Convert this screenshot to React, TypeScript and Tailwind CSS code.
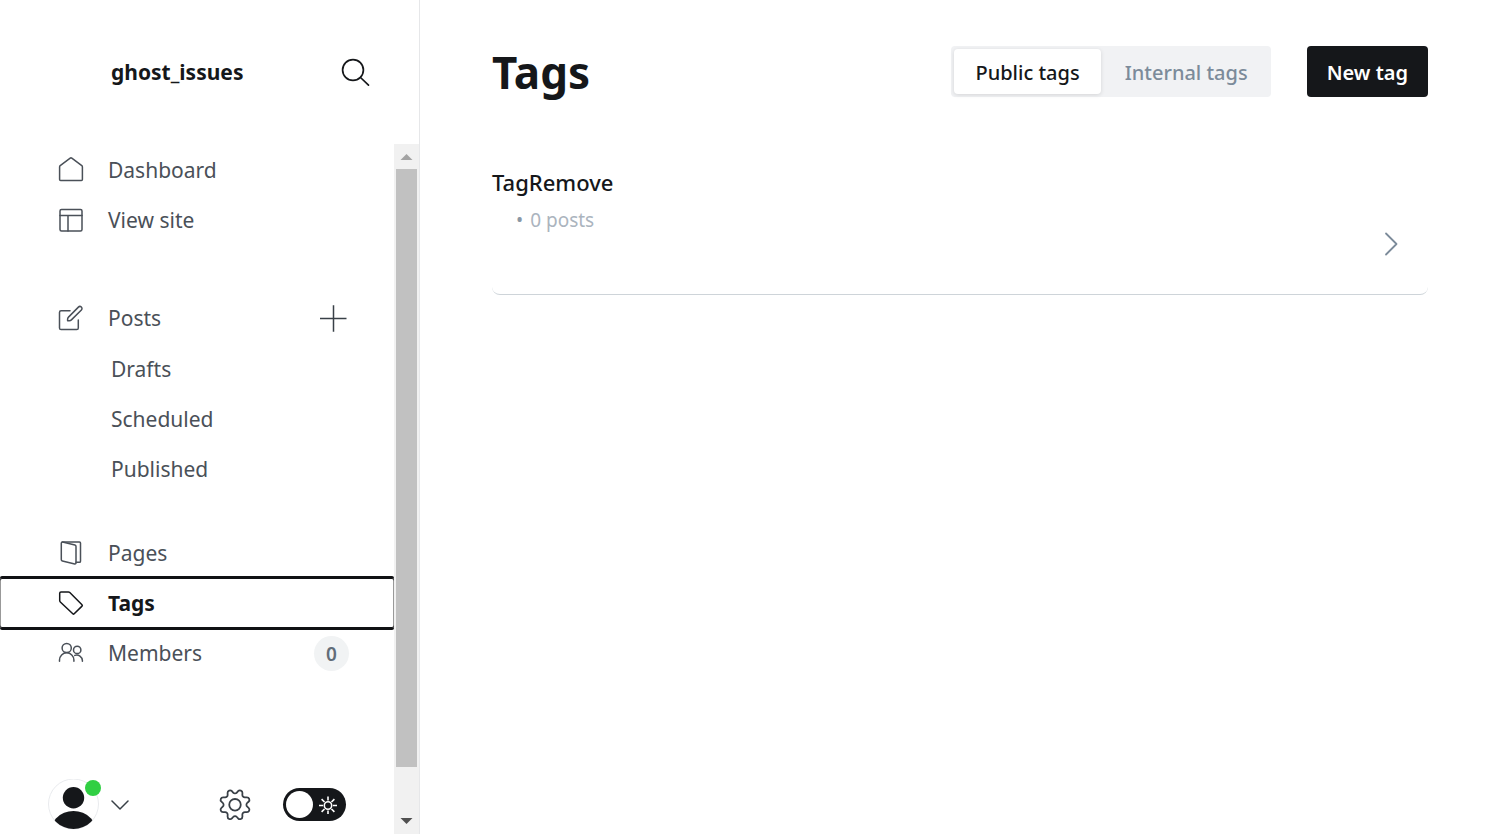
import type { ReactNode } from 'react';

function Icon({ children }: { children: ReactNode }) {
  return (
    <svg
      className="size-[26px] shrink-0"
      viewBox="0 0 26 26"
      fill="none"
      stroke="currentColor"
      strokeWidth="1.5"
      strokeLinecap="round"
      strokeLinejoin="round"
      aria-hidden="true"
    >
      {children}
    </svg>
  );
}

const HomeIcon = () => (
  <Icon>
    <path d="M1.6 9.9a1.5 1.5 0 0 1 .6-1.2L12.2 1.2a1.3 1.3 0 0 1 1.6 0L23.8 8.7a1.5 1.5 0 0 1 .6 1.2V22.5a1 1 0 0 1-1 1H2.6a1 1 0 0 1-1-1Z" />
  </Icon>
);

const LayoutIcon = () => (
  <Icon>
    <rect x="2" y="2.4" width="22" height="21.6" rx="1.5" />
    <path d="M2 8.5H24M10 8.5V24" />
  </Icon>
);

const EditIcon = () => (
  <Icon>
    <path d="M12 5.8H3.1a1.6 1.6 0 0 0-1.6 1.6V22.9a1.6 1.6 0 0 0 1.6 1.6H18.7a1.6 1.6 0 0 0 1.6-1.6V15" />
    <path d="M9.6 15.8V14.2a3 3 0 0 1 .9-2.1L20.4 2.1a2 2 0 0 1 3 2.9L13.4 14.9a3 3 0 0 1-2.1.9Z" />
  </Icon>
);

const PagesIcon = () => (
  <Icon>
    <path d="M4.6 2.1L16.9 5a1.4 1.4 0 0 1 1.1 1.4V23a1 1 0 0 1-1.2 1L4.4 21a1.4 1.4 0 0 1-1.1-1.4V3.1a1 1 0 0 1 1.3-1Z" />
    <path d="M4.3 2H21.4a1.1 1.1 0 0 1 1.1 1.1V21.2a1.1 1.1 0 0 1-1.1 1.1H18" />
  </Icon>
);

const TagIcon = () => (
  <Icon>
    <path d="M3 1.9H10.4a2 2 0 0 1 1.4.6L24 14.7a1 1 0 0 1 0 1.4L16.2 23.8a1 1 0 0 1-1.4 0L2.3 12a2 2 0 0 1-.6-1.4V3.2A1.3 1.3 0 0 1 3 1.9Z" />
  </Icon>
);

const MembersIcon = () => (
  <Icon>
    <circle cx="8.7" cy="8" r="4.6" />
    <path d="M1.5 21.2V20a7.2 7.2 0 0 1 14.4 0v1.2" />
    <circle cx="19.2" cy="9.9" r="3.7" />
    <path d="M16.8 15.4A5.6 5.6 0 0 1 24.4 20.6v.6" />
  </Icon>
);

function Label({ children }: { children: ReactNode }) {
  return <span className="pt-0.5">{children}</span>;
}

function NavItem({ icon, label, children }: { icon: ReactNode; label: string; children?: ReactNode }) {
  return (
    <li className="flex h-[50px] items-center pr-[45px]">
      <a href="#" className="flex h-full flex-1 items-center gap-6 pl-[58px]">
        {icon}
        <Label>{label}</Label>
      </a>
      {children}
    </li>
  );
}

function SubItem({ label }: { label: string }) {
  return (
    <li>
      <a href="#" className="flex h-[50px] items-center pl-[111px]">
        <Label>{label}</Label>
      </a>
    </li>
  );
}

function Scrollbar() {
  return (
    <div className="flex w-[25px] shrink-0 flex-col bg-[#f1f1f1]" aria-hidden="true">
      <svg className="h-[25px] w-full shrink-0" viewBox="0 0 25 25">
        <path d="M6.5 16L12.5 10L18.5 16Z" fill="#a3a3a3" />
      </svg>
      <div className="mx-[2px] flex-1 bg-[#c1c1c1]" />
      <div className="h-[42px] shrink-0" />
      <svg className="h-[25px] w-full shrink-0" viewBox="0 0 25 25">
        <path d="M6.5 9L12.5 15L18.5 9Z" fill="#505050" />
      </svg>
    </div>
  );
}

function UserBar() {
  return (
    <div className="mt-auto flex h-[60px] shrink-0 items-center px-12">
      <button type="button" aria-label="Account" className="flex items-center gap-3">
        <span className="relative block">
          <svg className="size-[51px]" viewBox="0 0 51 51" aria-hidden="true">
            <clipPath id="avatar-clip">
              <circle cx="25.5" cy="25" r="25" />
            </clipPath>
            <circle cx="25.5" cy="25" r="25" fill="#fff" stroke="#e9ebee" />
            <g clipPath="url(#avatar-clip)" fill="#15171a">
              <circle cx="25.5" cy="18.8" r="10.7" />
              <circle cx="25.5" cy="56.5" r="24.5" />
            </g>
          </svg>
          <span className="absolute top-px -right-[2px] size-4 rounded-full bg-[#30cf43]" />
        </span>
        <svg className="h-3.5 w-[18px]" viewBox="0 0 18 14" fill="none" stroke="#394047" strokeWidth="1.5" strokeLinecap="round" strokeLinejoin="round" aria-hidden="true">
          <path d="M1 4L9 12L17 4" />
        </svg>
      </button>
      <div className="ml-auto flex items-center gap-8">
        <button type="button" aria-label="Settings">
          <svg className="size-8" viewBox="-0.5 -1.1 25 25" fill="none" stroke="#394047" strokeWidth="1.4" strokeLinejoin="round" overflow="visible" aria-hidden="true">
            <path d="M10.546,2.438a1.957,1.957,0,0,0,2.908,0L14.4,1.4a1.959,1.959,0,0,1,3.41,1.413l-.071,1.4A1.958,1.958,0,0,0,19.79,6.271l1.4-.071A1.959,1.959,0,0,1,22.6,9.611L21.566,10.55a1.958,1.958,0,0,0,0,2.908l1.039.944a1.959,1.959,0,0,1-1.413,3.41l-1.4-.071a1.958,1.958,0,0,0-2.056,2.056l.071,1.4A1.959,1.959,0,0,1,14.4,22.6l-.941-1.039a1.957,1.957,0,0,0-2.908,0L9.606,22.6A1.959,1.959,0,0,1,6.2,21.192l.072-1.4a1.958,1.958,0,0,0-2.056-2.056l-1.4.071A1.958,1.958,0,0,1,1.4,14.4l1.041-.944a1.958,1.958,0,0,0,0-2.908L1.4,9.606A1.958,1.958,0,0,1,2.809,6.2l1.4.071A1.958,1.958,0,0,0,6.266,4.211L6.2,2.809A1.958,1.958,0,0,1,9.606,1.4Z" />
            <circle cx="12" cy="12" r="4.5" />
          </svg>
        </button>
        <button type="button" role="switch" aria-checked="false" aria-label="Dark mode" className="flex h-[33px] w-[63px] items-center justify-between rounded-full bg-[#15171a] pr-2 pl-[3px]">
          <span className="size-[27px] rounded-full bg-white" />
          <svg className="size-5" viewBox="0 0 20 20" fill="none" stroke="#fff" strokeWidth="1.6" aria-hidden="true">
            <circle cx="10" cy="11.5" r="3.7" />
            <path d="M10 2.5V6.5M10 16.5V20M1 11.5H5M15 11.5H19M3.6 5.1L6.5 8M13.5 15L16.4 17.9M3.6 17.9L6.5 15M13.5 8L16.4 5.1" />
          </svg>
        </button>
      </div>
    </div>
  );
}

function Sidebar() {
  return (
    <aside className="sticky top-0 flex h-screen w-[420px] shrink-0 flex-col border-r border-[#e6e7e9]">
      <header className="flex h-36 shrink-0 items-center justify-between pr-12 pl-[111px] text-[21px] font-bold text-[#15171a]">
        <Label>ghost_issues</Label>
        <button type="button" aria-label="Search">
          <svg className="size-[30px]" viewBox="0 0 30 30" fill="none" stroke="currentColor" strokeWidth="1.7" strokeLinecap="round" aria-hidden="true">
            <circle cx="12" cy="13" r="10.4" />
            <path d="M19.5 20.5L27.5 28.2" />
          </svg>
        </button>
      </header>
      <div className="flex min-h-0 flex-1">
        <div className="flex min-w-0 flex-1 flex-col">
          <nav className="pt-px text-[21px] text-[#4a5058]">
            <ul>
              <NavItem icon={<HomeIcon />} label="Dashboard" />
              <NavItem icon={<LayoutIcon />} label="View site" />
            </ul>
            <ul className="mt-12">
              <NavItem icon={<EditIcon />} label="Posts">
                <button type="button" aria-label="New post">
                  <svg className="size-8" viewBox="0 0 32 32" stroke="#394047" strokeWidth="1.5" aria-hidden="true">
                    <path d="M3 16.5H29.5M16.5 3.3V29.8" />
                  </svg>
                </button>
              </NavItem>
            </ul>
            <ul className="pt-px">
              <SubItem label="Drafts" />
              <SubItem label="Scheduled" />
              <SubItem label="Published" />
            </ul>
            <ul className="mt-[34px]">
              <NavItem icon={<PagesIcon />} label="Pages" />
              <li>
                <a
                  href="#"
                  aria-current="page"
                  className="flex h-[50px] items-center gap-6 rounded-xs pl-[58px] font-bold text-[#15171a] shadow-[inset_0_1px_0_#101114,inset_0_-1px_0_#101114,inset_1px_0_0_#999,inset_-1px_0_0_#999,0_-2px_0_#101114,0_2px_0_#101114]"
                >
                  <TagIcon />
                  <Label>Tags</Label>
                </a>
              </li>
              <NavItem icon={<MembersIcon />} label="Members">
                <span className="flex size-[35px] items-center justify-center rounded-full bg-[#f1f3f4] text-[19px] font-semibold text-[#626d79]">
                  <Label>0</Label>
                </span>
              </NavItem>
            </ul>
          </nav>
          <UserBar />
        </div>
        <Scrollbar />
      </div>
    </aside>
  );
}

export default function App() {
  return (
    <div className="flex min-h-screen bg-white font-['Noto_Sans','Open_Sans',sans-serif]">
      <Sidebar />
      <main className="min-w-0 flex-1 px-[72px]">
        <header className="flex h-[143px] items-center gap-9">
          <h1 className="mr-auto text-[44px] font-bold text-[#15171a]">Tags</h1>
          <div className="flex h-[51px] rounded bg-[#f1f2f4] p-[3px] text-[20px] font-medium">
            <button type="button" className="rounded bg-white px-[21px] pt-0.5 text-[#15171a] shadow-[0_1px_4px_rgba(0,0,0,0.12)]">
              Public tags
            </button>
            <button type="button" className="pt-0.5 pr-5 pl-6 text-[#7c8b9a]">
              Internal tags
            </button>
          </div>
          <button type="button" className="h-[51px] rounded bg-[#15171a] px-5 pt-0.5 text-[20px] font-semibold text-white">
            New tag
          </button>
        </header>
        <ul>
          <li className="rounded-lg border-b border-[#ced4d9]">
            <a href="#" className="flex h-[151px] items-start justify-between pt-[22px] pr-7">
              <div>
                <h2 className="text-[22px] leading-[34px] font-medium text-[#15171a]">TagRemove</h2>
                <p className="flex gap-[7px] pl-6 text-[19px] leading-[42px] text-[#abb4be]">
                  <span className="text-[#8a97a5]">•</span>
                  <span>0 posts</span>
                </p>
              </div>
              <svg className="mt-[65px] h-7 w-[18px]" viewBox="0 0 18 28" fill="none" stroke="#7c8b9a" strokeWidth="1.8" strokeLinecap="round" strokeLinejoin="round" aria-hidden="true">
                <path d="M4 3.5L14.5 14L4 24.5" />
              </svg>
            </a>
          </li>
        </ul>
      </main>
    </div>
  );
}
